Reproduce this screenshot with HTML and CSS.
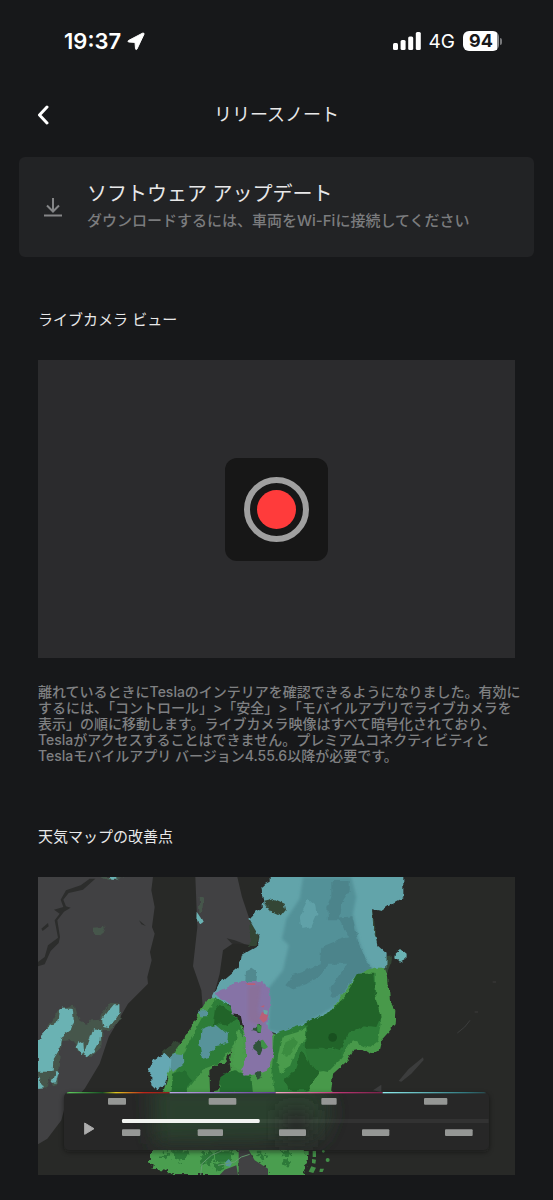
FILE: index.html
```html
<!DOCTYPE html>
<html lang="ja">
<head>
<meta charset="utf-8">
<meta name="viewport" content="width=device-width, initial-scale=1">
<title>リリースノート</title>
<link rel="stylesheet" href="styles.css">
</head>
<body>
<div class="status">
  <div class="status-left">
    <span class="time">19:37</span>
    <svg class="location" viewBox="0 0 18 19" aria-hidden="true"><path d="M15.500 1.200 1.500 8.500c-.9.500-.6 1.400.3 1.500l6.200.4.500 6.400c.1.900 1.100 1.100 1.500.2L17 2.200c.3-.8-.6-1.500-1.500-1z"/></svg>
  </div>
  <div class="status-right">
    <svg class="signal" viewBox="0 0 28 19" aria-hidden="true"><rect x="0" y="11" width="5" height="7" rx="1.500"/><rect x="7.600" y="8" width="5" height="10" rx="1.500"/><rect x="15.200" y="4.500" width="5" height="13.500" rx="1.500"/><rect x="22.800" y="0" width="5" height="18" rx="1.500"/></svg>
    <span class="network">4G</span>
    <span class="battery"><span class="battery-level">94</span><span class="battery-cap"></span></span>
  </div>
</div>

<header class="header">
  <button class="back" type="button" aria-label="戻る">
    <svg viewBox="0 0 12 20" aria-hidden="true"><path d="M10 2 2.500 10 10 18"/></svg>
  </button>
  <h1 class="title">リリースノート</h1>
</header>

<main>
  <section class="card">
    <svg class="download" viewBox="0 0 20 20" aria-hidden="true"><path d="M10 1v13M4 8.500l6 6 6-6M1 18.500h18"/></svg>
    <div>
      <h2 class="card-title">ソフトウェア アップデート</h2>
      <p class="card-text">ダウンロードするには、車両をWi-Fiに接続してください</p>
    </div>
  </section>

  <article class="note">
    <h2 class="note-title">ライブカメラ ビュー</h2>
    <div class="camera">
      <div class="record-tile"><div class="record-ring"><div class="record-dot"></div></div></div>
    </div>
    <p class="note-text">離れているときにTeslaのインテリアを確認できるようになりました。有効に<br>するには、「コントロール」&gt;「安全」&gt;「モバイルアプリでライブカメラを<br>表示」の順に移動します。ライブカメラ映像はすべて暗号化されており、<br>Teslaがアクセスすることはできません。プレミアムコネクティビティと<br>Teslaモバイルアプリ バージョン4.55.6以降が必要です。</p>
  </article>

  <article class="note">
    <h2 class="note-title">天気マップの改善点</h2>
    <svg class="map" viewBox="0 0 1431 894" role="img" aria-label="天気マップ">
      <defs>
        <filter id="edge" x="-5%" y="-5%" width="110%" height="110%" color-interpolation-filters="sRGB"><feTurbulence type="fractalNoise" baseFrequency="0.05" numOctaves="2" seed="4"/><feDisplacementMap in="SourceGraphic" scale="16" xChannelSelector="R" yChannelSelector="G"/></filter>
        <filter id="rough" x="-10%" y="-20%" width="120%" height="140%" color-interpolation-filters="sRGB"><feTurbulence type="fractalNoise" baseFrequency="0.07" numOctaves="2" seed="9"/><feDisplacementMap in="SourceGraphic" scale="34" xChannelSelector="R" yChannelSelector="G"/></filter>
        <filter id="haze" x="-20%" y="-20%" width="140%" height="140%"><feGaussianBlur stdDeviation="4"/></filter>
        <filter id="soft" x="-50%" y="-50%" width="200%" height="200%"><feGaussianBlur stdDeviation="30"/></filter>
        <filter id="shadow" x="-5%" y="-20%" width="110%" height="150%"><feGaussianBlur stdDeviation="8"/></filter>
        <clipPath id="panel"><rect x="78" y="645" width="1275" height="174" rx="16"/></clipPath>
        <linearGradient id="rain"><stop offset="0" stop-color="#62d261"/><stop offset=".35" stop-color="#164f21"/><stop offset=".48" stop-color="#e0c51d"/><stop offset=".75" stop-color="#bc2418"/><stop offset="1" stop-color="#8b221d"/></linearGradient>
        <linearGradient id="mix"><stop offset="0" stop-color="#bba7e8"/><stop offset="1" stop-color="#654091"/></linearGradient>
        <linearGradient id="ice"><stop offset="0" stop-color="#f3a8c8"/><stop offset=".6" stop-color="#b93472"/><stop offset="1" stop-color="#782148"/></linearGradient>
        <linearGradient id="snow"><stop offset="0" stop-color="#8eedef"/><stop offset=".8" stop-color="#31777e"/><stop offset="1" stop-color="#28494d"/></linearGradient>
      </defs>
      <rect width="1431" height="894" fill="#282927"/>
      <!-- land -->
      <path fill="#414143" d="M0 0H345L340 40 350 90 342 150 350 170 336 225 341 250 328 300 330 320 270 380 240 432 212 480 185 560 140 635 78 700 70 730 28 785 0 802z"/>
      <path fill="#414143" d="M472 0H598L612 60 634 125 662 190 645 206 590 196 555 220 545 290 525 365 494 388 490 340 465 268 478 150z"/>
      <path fill="#2c2d2c" d="M155 5 128 25 84 40 68 68 76 90 48 98 65 110 50 130 60 182 30 205 20 240 0 255 0 268 20 262 38 222 62 198 66 180 58 130 78 104 98 92 84 88 76 68 92 48 135 38 172 5zM10 155 30 138 32 148 14 162zM303 130 324 147 310 142zM566 184 590 190 618 200 582 200z"/>
      <path fill="#3c3d3d" d="M1082 612 1112 576 1155 541 1157 549 1120 590 1090 614zM1005 640 1030 623 1030 645z"/>
      <path fill="none" stroke="#3c3d3d" stroke-width="3" d="M1258 468 1280 450 1296 430M1310 405h10M1364 315h10"/>
      <!-- light traces -->
      <g fill="#46564b" filter="url(#edge)">
        <path d="M165 152 195 150 202 165 190 175 168 173zM190 0H260L235 8 205 8zM482 60 497 60 492 105 484 105z"/>
        <path d="M0 500 60 400 110 385 125 435 150 440 160 430 188 428 195 405 218 376 245 380 248 425 222 458 195 460 190 510 160 540 120 525 105 490 70 492 62 570 60 620 45 625 35 600 25 635 0 635z"/>
      </g>
      <g fill="#344635" filter="url(#edge)">
        <path d="M676 74 710 66 740 80 744 98 728 118 700 105zM634 132 658 160 664 190 648 208 636 206zM990 92 1003 100 1012 150 1018 210 1004 205 990 125zM1045 240 1062 238 1060 258 1045 295 1035 270zM375 520 418 490 440 530 436 570 380 590z"/>
      </g>
      <!-- scattered snow -->
      <g fill="#6ab2b3" filter="url(#edge)">
        <path d="M210 0H235V8H218zM476 104 488 122 494 134 486 140 475 130z"/>
        <path d="M75 395H104L108 432 98 460 70 480 64 520 46 550 44 584 0 584V487L28 455 62 430 66 402zM225 382 244 382 244 410 232 428 210 454 196 450 192 425 208 402zM172 454 190 460 188 490 168 525 150 540 138 532 152 490 160 465zM122 488 136 496 138 522 128 532 116 510zM52 582 62 586 54 616 40 618zM0 598 18 634 0 636z"/>
        <path d="M1086 216 1103 230 1102 248 1086 257 1072 244 1074 226z"/>
      </g>
      <!-- snow field -->
      <path filter="url(#edge)" fill="#62a4aa" d="M698 -10H1096V62L1056 84 1030 102 1002 96 1006 150 1018 205 1046 230 1045 272 1005 300 950 400 850 450 780 470 740 480 700 465 650 400 520 370 545 318 602 270 608 236 660 206 664 180 634 128 676 80 670 28 698 14z"/>
      <path filter="url(#haze)" fill="#539198" d="M795 0H940L955 60 945 110 962 190 985 250 1010 285 950 300 920 360 880 395 820 430 740 470 690 460 695 380 690 335 735 280 752 205 732 185 745 125 785 65z"/>
      <path filter="url(#edge)" fill="#4c848b" d="M880 12 935 12 935 40 912 75 905 130 870 130 868 90 880 60zM900 122 942 118 960 190 985 250 1005 285 950 300 910 355 878 360 878 330 928 260 870 260 835 310 760 336 742 325 765 295 845 265 850 210 900 190 930 180 915 150z"/>
      <path filter="url(#edge)" fill="#60a1a8" d="M812 65 835 85 838 110 820 150 790 156 785 120z"/>
      <path filter="url(#edge)" fill="#344635" d="M676 74 710 66 740 80 744 98 728 118 700 105z"/>
      <path filter="url(#edge)" fill="#51898f" d="M624 280 640 272 658 285 655 315 622 315z"/>
      <!-- rain field -->
      <path filter="url(#edge)" fill="#48994a" d="M1006 272H1040L1050 300 1056 370 1072 400 1070 445 1030 490 1022 522 990 530 968 515 945 520 930 550 885 590 878 660H370L390 600 385 560 415 515 445 475 490 395 510 365 545 368 620 460 705 470 740 480 800 445 880 400 960 292z"/>
      <path filter="url(#edge)" fill="#2d7d38" d="M535 365 575 385 600 430 620 480 605 465 585 510 540 560 498 575 478 600 440 650H400L410 590 430 550 455 490 490 425zM880 400 1010 290 1012 370 1028 440 1020 490 990 512 945 490 910 540 870 580 840 585 800 650H708L700 590 712 470 800 440z"/>
      <path filter="url(#edge)" fill="#216429" d="M960 290H1006L1010 350 1028 420 1015 450 975 445 930 470 905 520 880 510 815 525 800 505 808 460 800 440 880 400 920 360zM790 525 830 570 845 585 810 640H755L740 610 770 580zM545 380 575 400 595 425 565 445 525 440 530 400z"/>
      <path filter="url(#edge)" fill="#2b7735" d="M800 515 880 515 912 520 905 550 870 585 845 580 815 560z"/>
      <path filter="url(#edge)" fill="#4a9c4c" d="M730 480 780 465 805 448 803 485 770 530 755 570 725 588 718 550zM600 455 612 480 622 540 610 580 585 570 580 545 590 510z"/>
      <path filter="url(#edge)" fill="#3b8c40" d="M745 490 772 480 778 500 750 540 730 530z"/>
      <path filter="url(#edge)" fill="#246e30" d="M405 590 440 580 460 610 440 650H400zM545 595 590 580 640 600 645 650H545z"/>
      <circle cx="884" cy="481" r="13" fill="#18501f"/>
      <path filter="url(#edge)" fill="#282b27" d="M580 515 575 555 578 580 548 600 540 640 516 645 514 580 540 560 560 562z"/>
      <g filter="url(#edge)" fill="#57939a">
        <path d="M495 455 535 440 570 470 568 498 535 505 510 540 492 545 484 500zM484 400H508L506 418 490 418zM402 530 435 535 436 560 405 585 390 560z"/>
        <path fill="#65a8b3" d="M355 542 385 530 400 545 398 580 384 605 380 625 355 640 340 625 340 590 330 580z"/>
      </g>
      <!-- mixed precipitation -->
      <path filter="url(#edge)" fill="#8673a6" d="M532 348 575 328 590 315 675 315 694 335 698 365 688 440 706 480 707 530 690 580 665 590 620 596 608 575 625 540 620 470 608 415 584 412 575 380 545 365z"/>
      <path filter="url(#haze)" fill="#89709a" d="M630 330 670 320 660 400 675 450 630 430z"/>
      <path fill="#b95f76" d="M672 405 690 415 686 430 676 437 664 424zM667 390 679 384 678 391zM622 319h30v5h-22z"/>
      <path fill="#69a7a4" d="M676 398 690 401 687 413 678 410z"/>
      <path filter="url(#edge)" fill="#30533a" d="M640 462 665 438 672 470zM642 510 662 488 675 510 665 535 645 520zM650 587 668 585 670 600 655 608z"/>
      <path fill="#3e9247" d="M657 441 671 447 668 467 658 463zM668 490 675 488 690 510 680 517 670 510z"/>
      <!-- coastal showers -->
      <path filter="url(#rough)" fill="#4a9e4f" d="M345 810H604L604 894H400L385 878 350 875 330 848zM628 810H790L808 850 795 900H690L680 870 650 860z"/>
      <g filter="url(#rough)" fill="#2d7a39"><path d="M405 820h35l15 15-20 20-25-8zM490 825h28l12 20-12 20-28-3zM530 820h55v15l-18 25-35-15zM530 860l25-5 5 15-20 10zM370 835l15-5 10 12-18 6zM655 830h25l8 12-22 8zM730 822h22l8 14-22 5zM735 850h20l5 10-20 6z"/></g>
      <g fill="#439048"><path d="M796 822h16v12h-10zM824 822h10v18h-10zM822 846l12 2-2 12-10-2zM820 868l14 4-8 16-14-4zM846 875h12l-4 10h-10z"/><circle cx="869" cy="849" r="6"/><circle cx="856" cy="823" r="4"/></g>
      <path fill="#414143" d="M602 819H632L650 850 690 875V894H602zM560 878 595 865 600 894H545z"/>
      <path fill="#56949a" d="M572 846 582 858 576 869 563 866 562 856z"/>
      <path fill="none" stroke="#659d70" stroke-width="3" d="M488 894 492 860 520 835 550 822M540 865 590 855 610 840 635 832"/>
      <!-- timeline panel -->
      <rect x="78" y="651" width="1275" height="174" rx="16" fill="#111" opacity=".5" filter="url(#shadow)"/>
      <g clip-path="url(#panel)">
        <rect x="78" y="645" width="1275" height="174" fill="#272727"/>
        <path filter="url(#soft)" fill="#2b402d" d="M340 620H850L880 710 840 790 350 800z"/>
        <path filter="url(#soft)" fill="#292b29" d="M730 700h90v90h-90z"/>
        <rect x="86" y="645" width="309" height="4" fill="url(#rain)"/>
        <rect x="395" y="645" width="318" height="4" fill="url(#mix)"/>
        <rect x="713" y="645" width="321" height="4" fill="url(#ice)"/>
        <rect x="1034" y="645" width="309" height="4" fill="url(#snow)"/>
      </g>
      <rect x="252" y="726" width="1100" height="12" fill="#fff" opacity=".05"/>
      <rect x="252" y="726" width="413" height="12" rx="4" fill="#f1f3f0"/>
      <path fill="#adadad" stroke="#adadad" stroke-width="3" stroke-linejoin="round" d="M140 738 168 755 140 772z"/>
      <g fill="#959795">
        <rect x="210" y="663" width="54" height="20" rx="3"/><rect x="512" y="663" width="83" height="20" rx="3"/><rect x="850" y="663" width="46" height="20" rx="3"/><rect x="1158" y="663" width="70" height="20" rx="3"/>
        <rect x="252" y="757" width="55" height="20" rx="3"/><rect x="479" y="757" width="76" height="20" rx="3"/><rect x="723" y="757" width="81" height="20" rx="3"/><rect x="972" y="757" width="82" height="20" rx="3"/><rect x="1221" y="757" width="83" height="20" rx="3"/>
      </g>
    </svg>
  </article>
</main>
</body>
</html>
```
FILE: styles.css
```css
* {
  box-sizing: border-box;
}

body {
  margin: 0;
  padding-bottom: 24px;
  background: #17181a;
  color: #e8e8e9;
  font-family: Inter, "Noto Sans CJK JP", sans-serif;
}

h1, h2, p {
  margin: 0;
  font-weight: 400;
}

svg {
  display: block;
}

.status {
  display: flex;
  justify-content: space-between;
  align-items: center;
  height: 82px;
  padding: 0 51px 0 64px;
  color: #fff;
}

.status-left,
.status-right {
  display: flex;
  align-items: center;
}

.status-left {
  gap: 6px;
}

.status-right {
  gap: 8px;
}

.time {
  font-size: 22px;
  font-weight: 600;
}

.location {
  width: 18px;
  height: 19px;
  fill: #fff;
  stroke: #fff;
  stroke-width: 1;
}

.signal {
  width: 28px;
  height: 19px;
  fill: #fff;
}

.network {
  font-size: 19px;
}

.battery {
  display: flex;
  align-items: center;
  gap: 1px;
}

.battery-level {
  width: 36px;
  border-radius: 6px;
  background: linear-gradient(90deg, #fff 94%, #8b8c8d 94%);
  color: #17181a;
  font-size: 18px;
  font-weight: 700;
  line-height: 20px;
  text-align: center;
}

.battery-cap {
  width: 2px;
  height: 7px;
  border-radius: 0 2px 2px 0;
  background: #77787a;
}

.header {
  display: grid;
  grid-template-columns: 48px 1fr 48px;
  align-items: center;
  height: 65px;
  padding: 0 19px;
}

.back {
  display: flex;
  justify-content: center;
  align-items: center;
  width: 48px;
  height: 48px;
  padding: 0;
  border: 0;
  background: none;
}

.back svg {
  width: 12px;
  height: 20px;
  fill: none;
  stroke: #fff;
  stroke-width: 3;
  stroke-linecap: round;
  stroke-linejoin: round;
}

.title {
  font-size: 18px;
  line-height: 24px;
  text-align: center;
}

.card {
  display: flex;
  align-items: center;
  gap: 24px;
  min-height: 100px;
  margin: 10px 19px 0;
  padding: 0 24px;
  border-radius: 6px;
  background: #222325;
}

.download {
  flex: none;
  width: 20px;
  height: 20px;
  fill: none;
  stroke: #858688;
  stroke-width: 2;
}

.card-title {
  font-size: 20px;
  line-height: 28px;
}

.card-text {
  color: #7b7c7e;
  font-size: 15px;
  font-weight: 500;
  line-height: 26px;
}

.note {
  padding: 51px 38px 0;
}

.note-title {
  margin-bottom: 28px;
  font-size: 15px;
  line-height: 24px;
}

.camera {
  display: flex;
  justify-content: center;
  align-items: center;
  aspect-ratio: 8 / 5;
  background: #2b2b2d;
}

.record-tile {
  display: flex;
  justify-content: center;
  align-items: center;
  width: 103px;
  height: 103px;
  border-radius: 12px;
  background: #171717;
}

.record-ring {
  display: flex;
  justify-content: center;
  align-items: center;
  width: 65px;
  height: 65px;
  border: 6px solid #a0a0a0;
  border-radius: 50%;
}

.record-dot {
  width: 39px;
  height: 39px;
  border-radius: 50%;
  background: #ff3b3b;
}

.note-text {
  margin: 26px -16px 10px 0;
  color: #7f8082;
  font-size: 14px;
  font-weight: 500;
  line-height: 16px;
}

.map {
  width: 100%;
  height: auto;
}
```
